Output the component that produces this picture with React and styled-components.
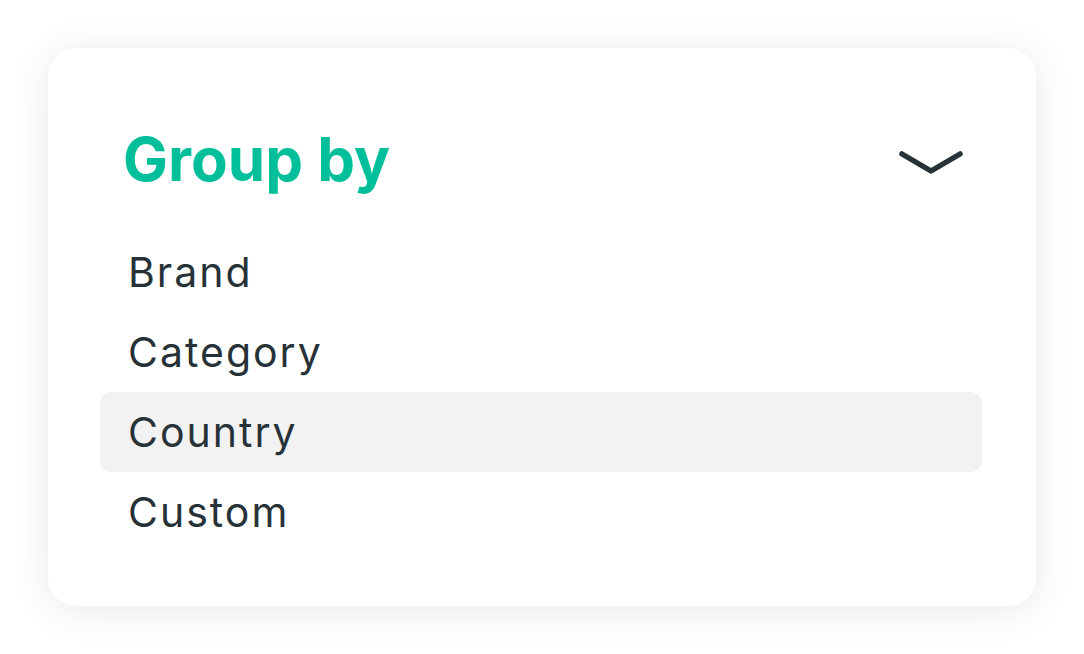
import React from "react";
import styled, { createGlobalStyle } from "styled-components";

const GlobalStyle = createGlobalStyle`
  html, body {
    margin: 0;
    padding: 0;
    background: #ffffff;
  }
  body {
    font-family: Inter, "Noto Sans", sans-serif;
  }
`;

const Page = styled.div`
  padding: 48px;
`;

const Card = styled.div`
  width: 988px;
  box-sizing: border-box;
  padding: 75px 54px 54px 52px;
  background: #ffffff;
  border-radius: 28px;
  box-shadow: 0 4px 40px rgba(0, 0, 0, 0.09);
`;

const Header = styled.div`
  display: flex;
  align-items: center;
  justify-content: space-between;
  height: 72px;
  padding: 0 18px 0 23px;
  margin-bottom: 37px;
`;

const Title = styled.h2`
  margin: 0;
  font-size: 60px;
  line-height: 72px;
  font-weight: 700;
  color: #00bf9a;
`;

const List = styled.ul`
  list-style: none;
  margin: 0;
  padding: 0;
`;

const Item = styled.li`
  height: 80px;
  line-height: 80px;
  padding: 0 28px;
  font-size: 41px;
  letter-spacing: 2px;
  color: #263238;
  border-radius: 12px;
  background: ${(p) => (p.$active ? "#f2f2f2" : "transparent")};
`;

const Chevron = () => (
  <svg width="66" height="30" viewBox="0 0 66 30" fill="none" style={{ marginTop: 4 }}>
    <path
      d="M4 8L33 25L62 8"
      stroke="#263238"
      strokeWidth="5.5"
      strokeLinecap="round"
      strokeLinejoin="round"
    />
  </svg>
);

const options = ["Brand", "Category", "Country", "Custom"];

export default function App() {
  return (
    <>
      <GlobalStyle />
      <Page>
        <Card>
          <Header>
            <Title>Group by</Title>
            <Chevron />
          </Header>
          <List>
            {options.map((o) => (
              <Item key={o} $active={o === "Country"}>
                {o}
              </Item>
            ))}
          </List>
        </Card>
      </Page>
    </>
  );
}
